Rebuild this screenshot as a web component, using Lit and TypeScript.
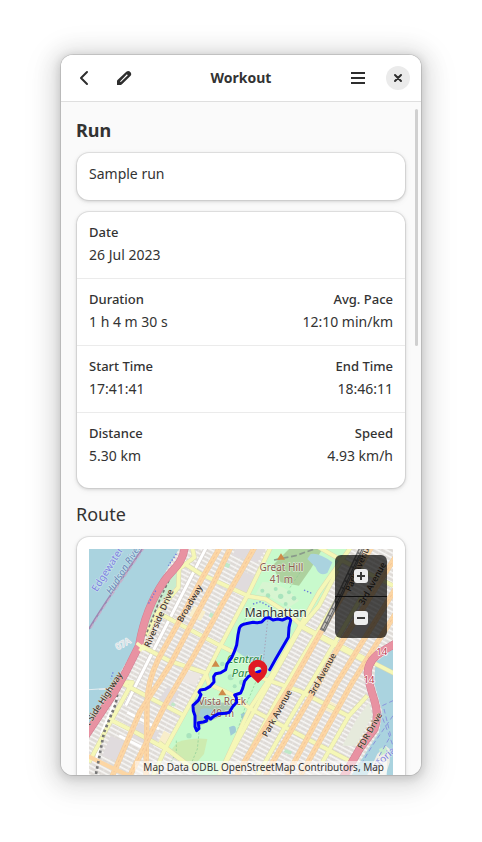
import { LitElement, html, css, svg } from "lit";
import { customElement } from "lit/decorators.js";

type Label = { x: number; y: number; text: string; kind: string; turn?: number };

const avenues = [
  "M393 -5L338 90L273 213L208 330Q174 400 174 470L171 690",
  "M425 -5L373 103L303 233L243 348L153 488L66 690",
  "M497 -5L400 165L313 323L228 468L118 690",
  "M850 -10L695 250L610 400L450 665L440 690",
  "M925 15L745 300L690 400L548 645L525 690",
  "M925 110L745 400L595 678",
  "M925 185L790 400L635 678",
];

const streets = [
  "M288 45L335 75L480 142L530 150L600 195L640 232L925 378",
  "M205 190L290 235L390 288L435 310",
  "M155 290L240 335L350 372L360 405L425 435L485 480L640 562L790 640",
  "M95 400L180 445L280 497",
  "M60 510L140 550L235 602L320 665",
  "M210 580L300 650",
  "M545 -5L480 130L392 295L350 378L228 600L188 690",
  "M785 -5L690 130L560 360L482 480L385 690",
  "M745 65L690 170L635 235L520 440L405 650",
  "M800 60L700 225L560 460L440 690",
  "M820 140L700 345L590 530L500 690",
  "M520 388L630 425L780 502",
  "M635 232L740 290L835 340",
  "M835 440L780 500L700 640",
  "M690 -5L760 35L912 110",
  "M155 290L110 360L95 400L130 400L50 545L0 640",
  "M310 -5L316 25L270 60L268 115L205 190L170 260",
];

const labels: Label[] = [
  { x: 64, y: 66, text: "Edgewater", kind: "boundary", turn: -58 },
  { x: 112, y: 66, text: "Hudson River", kind: "water", turn: -58 },
  { x: 218, y: 211, text: "Riverside Drive", kind: "road", turn: -67 },
  { x: 310, y: 168, text: "Broadway", kind: "road", turn: -60 },
  { x: 37, y: 476, text: "West Side Highway", kind: "road", turn: -57 },
  { x: 572, y: 497, text: "Park Avenue", kind: "road", turn: -61 },
  { x: 708, y: 380, text: "3rd Avenue", kind: "road", turn: -61 },
  { x: 858, y: 108, text: "3rd Avenue", kind: "road", turn: -61 },
  { x: 816, y: 58, text: "Park Avenue", kind: "road", turn: -66 },
  { x: 850, y: 550, text: "FDR Drive", kind: "road", turn: -60 },
  { x: 106, y: 292, text: "07A", kind: "shield", turn: -28 },
  { x: 885, y: 640, text: "Astoria", kind: "boundary", turn: -42 },
  { x: 878, y: 319, text: "14", kind: "exit" },
  { x: 840, y: 402, text: "14", kind: "exit" },
  { x: 577, y: 67, text: "Great Hill", kind: "peak" },
  { x: 577, y: 102, text: "41 m", kind: "peak" },
  { x: 400, y: 469, text: "Vista Rock", kind: "peak" },
  { x: 400, y: 503, text: "40 m", kind: "peak" },
  { x: 466, y: 342, text: "Central", kind: "park" },
  { x: 462, y: 384, text: "Park", kind: "park" },
  { x: 560, y: 204, text: "Manhattan", kind: "place" },
];

const route =
  "M542 362L560 330L598 265L600 235L605 214Q603 205 592 208L580 213L566 210L552 213L540 206L529 208L518 219L505 221L492 220L470 224Q455 226 451 238L447 258L443 288L436 308L428 326L414 345L410 362L395 371L380 374L374 383L375 399L362 413L348 421L334 423L330 429L336 437L328 454L312 469L313 486L318 500L318 533L323 545L330 539L328 521L343 519L352 516L354 509L349 505L355 502L365 510L373 503L389 494L411 493L421 490L431 473L443 460L442 446L437 438L455 432L461 418L467 396L479 382L500 372L515 366";

@customElement("route-map")
class RouteMap extends LitElement {
  static styles = css`
    :host { display: block; position: relative; overflow: hidden; background: #aad3df; }
    .canvas { display: block; width: 100%; height: 100%; }
    text { font-family: "Noto Sans", sans-serif; text-anchor: middle; paint-order: stroke; stroke-linejoin: round; }
    .road { font-size: 26px; font-weight: 500; fill: #3b3530; stroke: #f4dcc0; stroke-width: 2px; }
    .peak { font-size: 30px; fill: #8f5c50; stroke: #ffffff90; stroke-width: 4px; }
    .park { font-size: 33px; font-style: italic; fill: #2b8a3e; stroke: #ffffff90; stroke-width: 4px; }
    .place { font-size: 36px; fill: #333; stroke: #ffffff90; stroke-width: 6px; }
    .boundary { font-size: 30px; fill: #7c82e0; stroke: #ffffff60; stroke-width: 4px; }
    .water { font-size: 29px; font-style: italic; fill: #6687b5; stroke: #ffffff60; stroke-width: 4px; }
    .exit { font-size: 29px; fill: #b8334a; stroke: #fff; stroke-width: 4px; }
    .shield { font-size: 26px; fill: #d5dde2; stroke: #f3f5f6; stroke-width: 4px; }
    .controls { position: absolute; top: 6px; right: 6px; width: 52px; display: flex; flex-direction: column; border-radius: 6px; overflow: hidden; background: #000000b0; }
    .zoom { height: 41px; border: 0; padding: 0; background: none; display: grid; place-items: center; }
    .zoom + .zoom { border-top: 1px solid #101010; height: 42px; }
    .credit { position: absolute; right: 6px; bottom: 0; height: 14px; line-height: 13px; padding: 0 3px 0 8px; white-space: nowrap; font-size: 10px; color: #333; background: #ffffff90; }
  `;

  render() {
    return html`
      <svg class="canvas" viewBox="0 0 912 678" preserveAspectRatio="xMidYMid slice" role="img" aria-label="Route around Central Park">
        <defs>
          <pattern id="blocks" width="40" height="13" patternUnits="userSpaceOnUse" patternTransform="rotate(28)">
            <rect width="40" height="13" fill="#f7f6f4" />
            <rect y="2" width="40" height="8" fill="#dedad6" />
            <path d="M13 2V10M31 2V10" stroke="#ebe8e4" stroke-width="2" />
          </pattern>
        </defs>
        <rect width="912" height="678" fill="url(#blocks)" />
        <g fill="#e0dbdd">
          <path d="M450 60L500 85L475 135L425 112Z" /><path d="M235 415L270 432L240 488L200 465Z" />
          <path d="M150 520L210 550L190 595L130 565Z" /><path d="M805 205L845 225L820 265L780 250Z" />
          <path d="M65 560L120 585L95 640L40 620Z" /><path d="M440 0L530 0L505 40L430 20Z" />
        </g>
        <g fill="#f8eecb"><path d="M225 545L270 570L240 600L205 585Z" /><path d="M315 170L350 188L335 215L300 200Z" /><path d="M710 450L750 470L735 495L700 480Z" /></g>
        <g fill="#bfe8c8">
          <path d="M365 190l14 8-6 12-14-8zM390 160l12 5-6 9-12-6zM160 590l14 8-6 12-14-8zM590 600l20 8-6 9-20-8zM250 460l10 5-5 8-10-5zM410 40l14 6-5 12-14-6zM700 545l16 5-5 10-16-5z" />
        </g>
        <path d="M293 367L338 370L320 410L275 395Z" fill="#ebe6e2" />

        <path d="M0 0H270L205 110L165 190L135 300L70 410L0 530Z" fill="#aad3df" />
        <path d="M250 60L272 65L262 112L205 170L185 240L150 285L165 200L210 120ZM125 320L145 320L95 405L75 420Z" fill="#c8ecce" />
        <path d="M0 422L60 418M30 421H68" stroke="#e5edf0" stroke-width="3" />
        <path d="M163 -5C120 60 50 155 0 240" fill="none" stroke="#9d87b2" stroke-width="6" />
        <path d="M167 -5C124 60 54 155 4 240" fill="none" stroke="#c5b1cc" stroke-width="4" stroke-dasharray="15 8" />

        <path d="M550 0H785L660 210L482 480L388 678H330L228 600L345 395L480 140Z" fill="#c8facc" />
        <path d="M600 0H700L665 60L630 110L575 100L550 50Z" fill="#add19e" />
        <path d="M520 100Q545 95 600 125L630 155L600 175L545 145L500 135Z" fill="#d7f5d1" />
        <path d="M665 15Q690 10 730 40L715 72Q690 85 680 55L655 30Z" fill="#aad3df" />
        <path d="M455 225L520 221L545 206L602 214L596 266L530 370L505 350L440 305Z" fill="#aad3df" />
        <path d="M320 450L432 465L418 492L355 520L325 535L310 475Z" fill="#aac9b2" />
        <path d="M335 480Q365 470 400 500L350 512L330 500ZM420 535Q445 520 440 550L425 560ZM455 495L470 490L460 515Z" fill="#9fcbd6" />
        <path d="M265 580Q310 565 355 570L345 615L310 655L245 605Z" fill="#cdebb0" />
        <g fill="#a9e4bd">
          <circle cx="520" cy="125" r="6" /><circle cx="537" cy="140" r="7" /><circle cx="560" cy="120" r="6" /><circle cx="575" cy="142" r="8" />
          <circle cx="600" cy="130" r="6" /><circle cx="615" cy="148" r="7" /><circle cx="590" cy="165" r="6" /><circle cx="425" cy="385" r="9" />
          <circle cx="458" cy="400" r="8" /><circle cx="300" cy="560" r="8" /><circle cx="437" cy="412" r="6" /><circle cx="400" cy="345" r="7" />
        </g>
        <g fill="none" stroke="#8acb95" stroke-width="2" stroke-dasharray="7 5">
          <path d="M262 575V610L240 650M330 550L325 600L300 660M485 175L460 230M390 310L370 350M500 400L470 470L440 560M640 60L600 120" />
        </g>
        <path d="M536 215L522 345" stroke="#a7a0b5" stroke-width="3" stroke-dasharray="4 6" />
        <path d="M492 165L515 158L545 175M645 123L672 135" fill="none" stroke="#6878dc" stroke-width="4" stroke-dasharray="4 6" />
        <path d="M555 33L620 20L690 -5" fill="none" stroke="#8a9b8b" stroke-width="5" stroke-dasharray="18 8" />

        <path d="M925 290L860 340L855 400L880 490L870 550L780 690H925Z" fill="#aad3df" />
        <path d="M800 590L850 500L840 460L800 515L760 590Z" fill="#e6eadc" />
        <path d="M835 678L865 615L890 590L902 600V640L890 678Z" fill="#efede5" />
        <path d="M870 600L890 592L898 610L875 620Z" fill="#c8ecce" />
        <path d="M880 470L912 455M885 480L905 560L860 640M912 500L850 590L820 640M865 465L912 590" fill="none" stroke="#8b96dc" stroke-width="3" stroke-dasharray="14 9" />

        <g fill="none" stroke-linejoin="round">
          <path d="M352 -5L180 330L110 470" stroke="#d5d0cc" stroke-width="13" />
          <path d="M352 -5L180 330L110 470" stroke="#fff" stroke-width="9" />
          <path d="M85 440L40 545L20 640M115 490L210 540M100 530L180 570M90 560L160 595" stroke="#fff" stroke-width="8" />
          ${streets.map((d) => svg`<path d=${d} stroke="#dadaae" stroke-width="14" />`)}
          ${streets.map((d) => svg`<path d=${d} stroke="#f5f7b7" stroke-width="11" />`)}
          ${avenues.map((d) => svg`<path d=${d} stroke="#eccaa0" stroke-width="16" /><path d=${d} stroke="#fcd6a4" stroke-width="14" /><path d=${d} stroke="#efbd92" stroke-width="2" stroke-dasharray="9 7" />`)}
          <path d="M-10 618L55 650L140 690" stroke="#fcd6a4" stroke-width="13" />
          <path d="M820 -5L740 165L700 245" stroke="#777" stroke-width="17" />
          <path d="M820 -5L740 165L700 245" stroke="#c9c5c0" stroke-width="9" stroke-dasharray="18 5" />
          <path d="M822 -5L742 165L702 245" stroke="#666" stroke-width="3" />
          <path d="M90 405L80 465L45 550L20 680" stroke="#777" stroke-width="8" stroke-dasharray="8 8" />
          <path d="M247 80L215 145L170 260" stroke="#777" stroke-width="5" stroke-dasharray="9 7" />
          <g stroke="#cf7d91" stroke-width="24"><path d="M287 -5C282 45 250 60 225 97C185 155 162 220 150 290L110 370L70 440L-10 560" /><path d="M925 280L883 305Q838 330 836 370Q838 400 855 450Q872 500 856 540L813 598L760 690" /></g>
          <g stroke="#e892a2" stroke-width="21"><path d="M287 -5C282 45 250 60 225 97C185 155 162 220 150 290L110 370L70 440L-10 560" /><path d="M925 280L883 305Q838 330 836 370Q838 400 855 450Q872 500 856 540L813 598L760 690" /></g>
          <path d="M262 15L238 50M200 125L178 165M72 370L66 390" stroke="#6876df" stroke-width="4" stroke-dasharray="4 6" />
          <path d="M143 282L168 302M152 306L165 288" stroke="#f7fabf" stroke-width="10" />
        </g>
        <path d="M576 13L588 32H564ZM380 334L392 353H368ZM400 420L412 439H388Z" fill="#cf8b49" />
        ${labels.map((l) => svg`<text class=${l.kind} x=${l.x} y=${l.y} transform=${l.turn ? `rotate(${l.turn} ${l.x} ${l.y})` : "rotate(0)"}>${l.text}</text>`)}
        <path d=${route} fill="none" stroke="#0000f5" stroke-width="9" stroke-linejoin="round" stroke-linecap="round" />
        <path fill="#e01b24" fill-rule="evenodd" d="M507 403L488 384Q478 374 478 361A28 28 0 0 1 535 361Q535 374 526 384ZM507 353A10 10 0 0 0 507 373A10 10 0 0 0 507 353Z" />
      </svg>
      <div class="controls">
        <button class="zoom" aria-label="Zoom in"><svg width="14" height="14" viewBox="0 0 14 14"><rect width="14" height="14" rx="3" fill="#eee" /><path d="M3 7H11M7 3V11" stroke="#3a3a38" stroke-width="2" /></svg></button>
        <button class="zoom" aria-label="Zoom out"><svg width="14" height="14" viewBox="0 0 14 14"><rect width="14" height="14" rx="3" fill="#eee" /><path d="M3 7H11" stroke="#3a3a38" stroke-width="2" /></svg></button>
      </div>
      <div class="credit">Map Data ODBL OpenStreetMap Contributors, Map</div>
    `;
  }
}

type Field = { label: string; value: string };
const rows: Field[][] = [
  [{ label: "Date", value: "26 Jul 2023" }],
  [{ label: "Duration", value: "1 h 4 m 30 s" }, { label: "Avg. Pace", value: "12:10 min/km" }],
  [{ label: "Start Time", value: "17:41:41" }, { label: "End Time", value: "18:46:11" }],
  [{ label: "Distance", value: "5.30 km" }, { label: "Speed", value: "4.93 km/h" }],
];

@customElement("app-root")
class AppRoot extends LitElement {
  static styles = css`
    :host { display: flex; box-sizing: border-box; height: 100vh; padding: 55px 61px 67px; background: #fff; color: #333; font-family: "Noto Sans", sans-serif; font-size: 14px; line-height: 20px; }
    * { box-sizing: border-box; }
    .window { flex: 1; min-width: 0; display: flex; flex-direction: column; position: relative; overflow: hidden; border-radius: 12px; background: #fafafa; }
    .frame { flex: 1; min-width: 0; display: flex; border-radius: 12px; box-shadow: 0 0 0 1px #0000001c, 0 2px 8px 2px #00000021, 0 3px 20px 10px #00000017, 0 6px 32px 16px #0000000a; }
    .bar { flex: none; height: 47px; display: grid; grid-template-columns: 1fr auto 1fr; align-items: center; padding: 0 11px; background: #fff; border-bottom: 1px solid #dfdfdf; }
    .group { display: flex; gap: 16px; }
    .group.end { justify-content: flex-end; }
    .icon { width: 24px; height: 24px; padding: 0; border: 0; background: none; display: grid; place-items: center; border-radius: 50%; color: #2e2e2e; }
    .icon.close { background: #ebebeb; }
    h1, h2, dl, dd, dt, p { margin: 0; }
    h1 { font-size: 14px; font-weight: 700; }
    .body { flex: 1; min-height: 0; display: flex; flex-direction: column; padding: 15px 16px 0; }
    h2 { flex: none; line-height: 26px; margin-left: -1px; }
    .kind { font-size: 18px; font-weight: 700; margin-bottom: 10px; }
    .section { font-size: 18px; font-weight: 400; margin: 13px 0 10px -1px; }
    .card { flex: none; background: #fff; border-radius: 12px; box-shadow: 0 0 0 1px #00000012, 0 1px 3px 1px #0000001c, 0 2px 6px 2px #00000008; }
    .note { height: 47px; padding: 11px 12px; margin-bottom: 12px; }
    .row { display: flex; justify-content: space-between; padding: 9px 12px 12px; border-bottom: 1px solid #ebebeb; }
    .row:last-child { border-bottom: 0; padding-bottom: 21px; }
    .field:nth-child(2) { text-align: right; }
    dt { font-size: 13px; font-weight: 500; line-height: 22px; }
    dd { line-height: 23px; }
    .card.map { flex: 1; min-height: 0; display: flex; padding: 12px 12px 0; border-radius: 12px 12px 0 0; }
    route-map { flex: 1; min-width: 0; }
    .thumb { position: absolute; top: 54px; right: 3px; width: 3px; height: 237px; border-radius: 2px; background: #d0d0d0; }
  `;

  render() {
    return html`
      <div class="frame"><main class="window">
        <header class="bar">
          <div class="group">
            <button class="icon" aria-label="Back"><svg width="16" height="16" viewBox="0 0 16 16"><path d="M11 2L5 8L11 14" fill="none" stroke="currentColor" stroke-width="2" stroke-linecap="round" stroke-linejoin="round" /></svg></button>
            <button class="icon" aria-label="Edit"><svg width="16" height="16" viewBox="0 0 16 16"><path fill="currentColor" fill-rule="evenodd" d="M1 15V11.2Q1 10.6 1.5 10.1L10.3 1.8Q12 .5 13.8 1.4Q16.2 3.3 14.6 5.8L6 14.3Q5.3 15 4.6 15ZM4 11.4L4.8 12.1L11.8 5.2L10.9 4.3Z" /></svg></button>
          </div>
          <h1>Workout</h1>
          <div class="group end">
            <button class="icon" aria-label="Main menu"><svg width="16" height="16" viewBox="0 0 16 16"><path d="M1 3H15M1 8H15M1 13H15" stroke="currentColor" stroke-width="2" /></svg></button>
            <button class="icon close" aria-label="Close"><svg width="16" height="16" viewBox="0 0 16 16"><path d="M5 5L11 11M11 5L5 11" stroke="currentColor" stroke-width="2" stroke-linecap="round" /></svg></button>
          </div>
        </header>
        <section class="body">
          <h2 class="kind">Run</h2>
          <p class="card note">Sample run</p>
          <div class="card">
            ${rows.map((r) => html`<div class="row">${r.map((f) => html`<dl class="field"><dt>${f.label}</dt><dd>${f.value}</dd></dl>`)}</div>`)}
          </div>
          <h2 class="section">Route</h2>
          <div class="card map"><route-map></route-map></div>
        </section>
        <div class="thumb"></div>
      </main></div>
    `;
  }
}
